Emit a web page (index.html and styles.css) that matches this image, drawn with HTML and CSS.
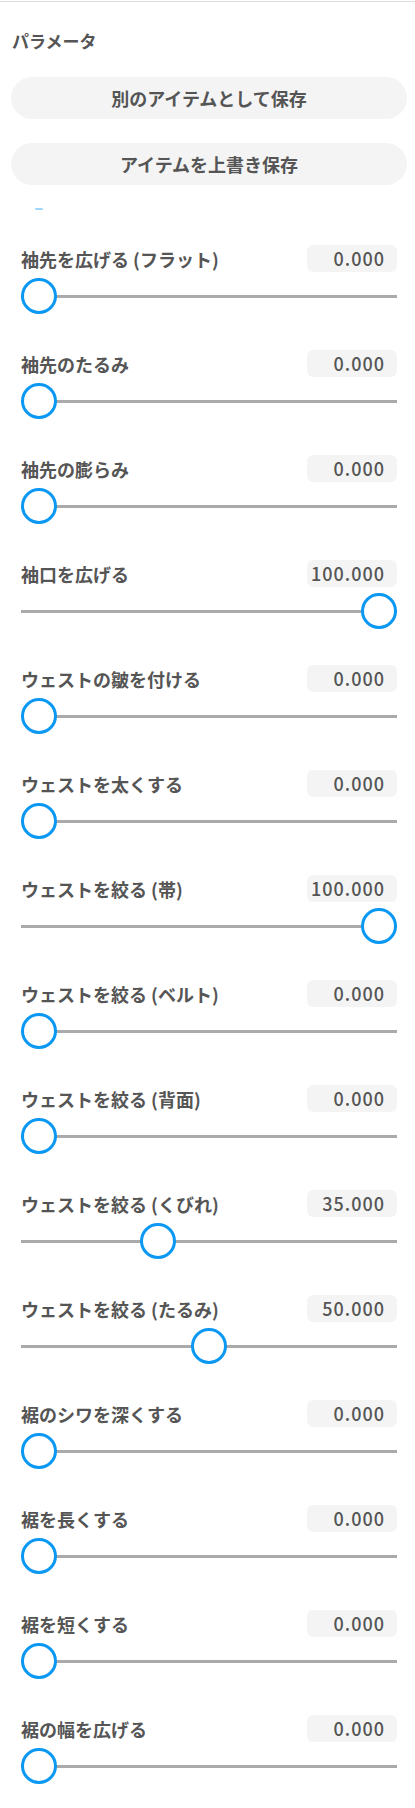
FILE: index.html
```html
<!DOCTYPE html>
<html lang="ja">
<head>
<meta charset="utf-8">
<title>パラメータ</title>
<link rel="stylesheet" href="styles.css">
</head>
<body>
<div class="topline"></div>
<div class="panel">
  <h2 class="heading">パラメータ</h2>
  <button class="btn">別のアイテムとして保存</button>
  <button class="btn">アイテムを上書き保存</button>
  <div class="clip-hint"></div>
  <div class="params">
    <div class="param"><div class="head"><span class="label">袖先を広げる (フラット)</span><span class="value">0.000</span></div><input class="range" type="range" min="0" max="100" value="0"></div>
    <div class="param"><div class="head"><span class="label">袖先のたるみ</span><span class="value">0.000</span></div><input class="range" type="range" min="0" max="100" value="0"></div>
    <div class="param"><div class="head"><span class="label">袖先の膨らみ</span><span class="value">0.000</span></div><input class="range" type="range" min="0" max="100" value="0"></div>
    <div class="param"><div class="head"><span class="label">袖口を広げる</span><span class="value">100.000</span></div><input class="range" type="range" min="0" max="100" value="100"></div>
    <div class="param"><div class="head"><span class="label">ウェストの皺を付ける</span><span class="value">0.000</span></div><input class="range" type="range" min="0" max="100" value="0"></div>
    <div class="param"><div class="head"><span class="label">ウェストを太くする</span><span class="value">0.000</span></div><input class="range" type="range" min="0" max="100" value="0"></div>
    <div class="param"><div class="head"><span class="label">ウェストを絞る (帯)</span><span class="value">100.000</span></div><input class="range" type="range" min="0" max="100" value="100"></div>
    <div class="param"><div class="head"><span class="label">ウェストを絞る (ベルト)</span><span class="value">0.000</span></div><input class="range" type="range" min="0" max="100" value="0"></div>
    <div class="param"><div class="head"><span class="label">ウェストを絞る (背面)</span><span class="value">0.000</span></div><input class="range" type="range" min="0" max="100" value="0"></div>
    <div class="param"><div class="head"><span class="label">ウェストを絞る (くびれ)</span><span class="value">35.000</span></div><input class="range" type="range" min="0" max="100" value="35"></div>
    <div class="param"><div class="head"><span class="label">ウェストを絞る (たるみ)</span><span class="value">50.000</span></div><input class="range" type="range" min="0" max="100" value="50"></div>
    <div class="param"><div class="head"><span class="label">裾のシワを深くする</span><span class="value">0.000</span></div><input class="range" type="range" min="0" max="100" value="0"></div>
    <div class="param"><div class="head"><span class="label">裾を長くする</span><span class="value">0.000</span></div><input class="range" type="range" min="0" max="100" value="0"></div>
    <div class="param"><div class="head"><span class="label">裾を短くする</span><span class="value">0.000</span></div><input class="range" type="range" min="0" max="100" value="0"></div>
    <div class="param"><div class="head"><span class="label">裾の幅を広げる</span><span class="value">0.000</span></div><input class="range" type="range" min="0" max="100" value="0"></div>
  </div>
</div>
</body>
</html>
```

FILE: styles.css
```css
html, body {
  margin: 0;
  padding: 0;
  background: #ffffff;
}
body {
  font-family: "Noto Sans CJK JP", "Noto Sans", sans-serif;
  color: #555555;
}
.topline {
  height: 1px;
  margin-top: 1px;
  background: #dedede;
}
.panel {
  padding: 0 8px 0 11px;
  display: flex;
  flex-direction: column;
}
.heading {
  margin: 27px 0 0 1px;
  font-size: 17px;
  line-height: 24px;
  font-weight: 700;
  color: #555555;
}
.btn {
  margin-top: 24px;
  height: 42px;
  border: none;
  border-radius: 21px;
  background: #f4f4f4;
  color: #555555;
  font-family: inherit;
  font-size: 18px;
  font-weight: 700;
  padding: 0;
  width: 100%;
}
.clip-hint {
  margin: 23px 0 0 24px;
  width: 8px;
  height: 2px;
  border-radius: 1px;
  background: #9fd6fb;
}
.params {
  margin-top: 35px;
  padding: 0 10px;
  display: flex;
  flex-direction: column;
  gap: 36px;
}
.param {
  display: flex;
  flex-direction: column;
  gap: 6px;
}
.head {
  display: flex;
  justify-content: space-between;
  align-items: center;
  height: 27px;
}
.label {
  font-size: 18px;
  font-weight: 700;
  color: #555555;
  white-space: nowrap;
}
.value {
  width: 90px;
  height: 27px;
  box-sizing: border-box;
  padding-right: 12px;
  border-radius: 6px;
  background: #f4f4f4;
  text-align: right;
  font-size: 18px;
  line-height: 27px;
  font-weight: 500;
  letter-spacing: 1px;
  color: #555555;
}
.range {
  -webkit-appearance: none;
  appearance: none;
  display: block;
  width: 100%;
  height: 36px;
  margin: 0;
  padding: 0;
  background: transparent;
}
.range::-webkit-slider-runnable-track {
  height: 3px;
  background: #aaaaaa;
  border: none;
}
.range::-webkit-slider-thumb {
  -webkit-appearance: none;
  appearance: none;
  box-sizing: border-box;
  width: 36px;
  height: 36px;
  margin-top: -16.5px;
  border: 3px solid #0a98f2;
  border-radius: 50%;
  background: #ffffff;
}
```
